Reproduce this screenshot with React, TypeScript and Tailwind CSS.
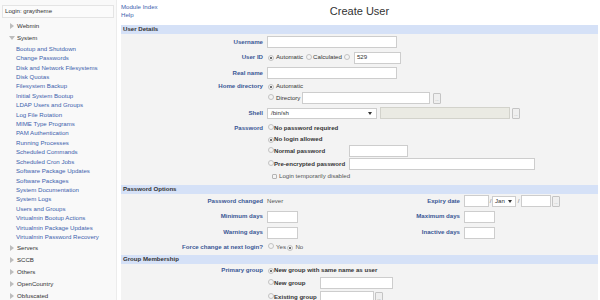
import React from 'react';

const systemItems = [
  'Bootup and Shutdown',
  'Change Passwords',
  'Disk and Network Filesystems',
  'Disk Quotas',
  'Filesystem Backup',
  'Initial System Bootup',
  'LDAP Users and Groups',
  'Log File Rotation',
  'MIME Type Programs',
  'PAM Authentication',
  'Running Processes',
  'Scheduled Commands',
  'Scheduled Cron Jobs',
  'Software Package Updates',
  'Software Packages',
  'System Documentation',
  'System Logs',
  'Users and Groups',
  'Virtualmin Bootup Actions',
  'Virtualmin Package Updates',
  'Virtualmin Password Recovery',
];

const Radio = ({ on }: { on?: boolean }) => (
  <span className="inline-flex w-[6px] h-[6px] shrink-0 items-center justify-center rounded-full border border-[#c2c2c2] bg-[#f4f4f4]">
    {on && <span className="w-[2px] h-[2px] rounded-full bg-[#444]" />}
  </span>
);

const Box = ({ w, className = '' }: { w: string; className?: string }) => (
  <span className={`block h-[12px] shrink-0 border border-[#cdcdcd] bg-white ${w} ${className}`} />
);

const DotsButton = () => (
  <span className="flex w-[8px] h-[11px] shrink-0 items-end justify-center border border-[#c4c4c4] bg-[#efefef] rounded-[1px] text-[4px] leading-[6px] text-[#999]">
    ...
  </span>
);

const Arrow = () => (
  <span className="w-0 h-0 border-x-[2px] border-x-transparent border-t-[3px] border-t-[#333]" />
);

const Category = ({ name, open }: { name: string; open?: boolean }) => (
  <div className="h-[12px] flex items-center pl-[9px]">
    {open ? (
      <span className="w-0 h-0 border-x-[3px] border-x-transparent border-t-[4px] border-t-[#bdbdbd]" />
    ) : (
      <span className="w-0 h-0 border-y-[3px] border-y-transparent border-l-[4px] border-l-[#bdbdbd] ml-[1px] mr-[1px]" />
    )}
    <span className="ml-[2px] text-[#333]">{name}</span>
  </div>
);

const Label = ({ children, h }: { children: React.ReactNode; h: string }) => (
  <div className={`w-[142px] shrink-0 flex items-center justify-end font-bold text-[#3a5795] ${h}`}>
    {children}
  </div>
);

const Label2 = ({ children }: { children: React.ReactNode }) => (
  <div className="w-[64px] shrink-0 flex items-center justify-end font-bold text-[#3a5795]">{children}</div>
);

const SectionHeader = ({ title }: { title: string }) => (
  <div className="h-[9px] bg-[#d5e1f7] pl-[2px] flex items-center font-bold text-[#333]">{title}</div>
);

export default function App() {
  return (
    <div className="w-[600px] h-[300px] overflow-hidden flex bg-white font-['Liberation_Sans',Arial,sans-serif] text-[6.1px] leading-none text-[#333]">
      <aside className="w-[117px] shrink-0 h-full bg-[#f9f9f9] border-r border-[#ececec]">
        <div className="pt-[5px] px-[2px]">
          <div className="h-[13px] border border-[#e4e4e4] bg-[#fbfbfb] flex items-center pl-[2px]">Login: graytheme</div>
        </div>
        <div className="mt-[2px]">
          <Category name="Webmin" />
          <Category name="System" open />
          {systemItems.map((item) => (
            <div key={item} className="h-[9.43px] flex items-center pl-[16px] text-[#3d62ad]">
              {item}
            </div>
          ))}
          <Category name="Servers" />
          <Category name="SCCB" />
          <Category name="Others" />
          <Category name="OpenCountry" />
          <Category name="Obfuscated" />
        </div>
      </aside>

      <main className="flex-1 pl-[4px] pr-[2px]">
        <div className="grid grid-cols-[1fr_auto_1fr] h-[25px]">
          <div className="pt-[3px] text-[#3d62ad]">
            <div className="h-[8px] flex items-center">Module Index</div>
            <div className="h-[8px] flex items-center">Help</div>
          </div>
          <div className="pt-[5px] text-[11px] leading-[12px] text-[#333]">Create User</div>
          <div />
        </div>

        <div className="bg-[#f3f3f3]">
          <SectionHeader title="User Details" />

          <div className="flex h-[16px]">
            <Label h="h-[16px]">Username</Label>
            <div className="ml-[4px] flex items-center">
              <Box w="w-[130px]" />
            </div>
          </div>

          <div className="flex h-[15px]">
            <Label h="h-[15px]">User ID</Label>
            <div className="ml-[4px] flex items-center">
              <span className="ml-[1px]"><Radio on /></span>
              <span className="ml-[2px]">Automatic</span>
              <span className="ml-[3px]"><Radio /></span>
              <span className="ml-[1px]">Calculated</span>
              <span className="ml-[2px]"><Radio /></span>
              <span className="ml-[4px] flex h-[12px] w-[47px] items-center border border-[#cdcdcd] bg-white pl-[2px]">529</span>
            </div>
          </div>

          <div className="flex h-[16px]">
            <Label h="h-[16px]">Real name</Label>
            <div className="ml-[4px] flex items-center">
              <Box w="w-[130px]" />
            </div>
          </div>

          <div className="flex">
            <Label h="h-[11px]">Home directory</Label>
            <div className="ml-[4px]">
              <div className="h-[11px] flex items-center">
                <span className="ml-[1px]"><Radio on /></span>
                <span className="ml-[2px]">Automatic</span>
              </div>
              <div className="h-[12px] flex items-center">
                <span className="ml-[1px]"><Radio /></span>
                <span className="ml-[2px] w-[26px]">Directory</span>
                <Box w="w-[128px]" />
                <span className="ml-[3px]"><DotsButton /></span>
              </div>
            </div>
          </div>

          <div className="flex h-[18px]">
            <Label h="h-[18px]">Shell</Label>
            <div className="ml-[4px] flex items-center">
              <span className="flex h-[11px] w-[110px] items-center justify-between border border-[#cdcdcd] bg-white pl-[3px] pr-[4px]">
                /bin/sh
                <Arrow />
              </span>
              <span className="ml-[3px] block h-[12px] w-[130px] border border-[#d2d2cb] bg-[#eaeae3]" />
              <span className="ml-[2px]"><DotsButton /></span>
            </div>
          </div>

          <div className="flex">
            <Label h="h-[12px]">Password</Label>
            <div className="ml-[4px] font-bold">
              <div className="h-[12px] flex items-center">
                <span className="ml-[1px]"><Radio /></span>
                <span>No password required</span>
              </div>
              <div className="h-[11px] flex items-center">
                <span className="ml-[1px]"><Radio on /></span>
                <span>No login allowed</span>
              </div>
              <div className="h-[12px] flex items-center">
                <span className="ml-[1px]"><Radio /></span>
                <span className="w-[75px]">Normal password</span>
                <Box w="w-[59px]" />
              </div>
              <div className="h-[14px] flex items-center">
                <span className="ml-[1px]"><Radio /></span>
                <span className="w-[75px]">Pre-encrypted password</span>
                <Box w="w-[186px]" />
              </div>
              <div className="h-[10px] flex items-center font-normal text-[#555]">
                <span className="ml-[5px] w-[5px] h-[5px] border border-[#b4b4b4] bg-[#f4f4f4] rounded-[1px]" />
                <span className="ml-[2px]">Login temporarily disabled</span>
              </div>
              <div className="h-[4px]" />
            </div>
          </div>

          <SectionHeader title="Password Options" />

          <div className="flex h-[14px]">
            <Label h="h-[14px]">Password changed</Label>
            <div className="ml-[4px] w-[129px] flex items-center text-[#555]">Never</div>
            <Label2>Expiry date</Label2>
            <div className="ml-[4px] flex items-center">
              <Box w="w-[25px]" />
              <span className="w-[3px] text-center text-[#777]">/</span>
              <span className="flex h-[11px] w-[24px] items-center justify-between border border-[#cdcdcd] bg-white pl-[2px] pr-[3px]">
                Jan
                <Arrow />
              </span>
              <span className="w-[5px] text-center text-[#777]">/</span>
              <Box w="w-[30px]" />
              <span className="ml-[1px]"><DotsButton /></span>
            </div>
          </div>

          <div className="flex h-[17px]">
            <Label h="h-[17px]">Minimum days</Label>
            <div className="ml-[4px] w-[129px] flex items-center">
              <Box w="w-[31px]" />
            </div>
            <Label2>Maximum days</Label2>
            <div className="ml-[4px] flex items-center">
              <Box w="w-[31px]" />
            </div>
          </div>

          <div className="flex h-[15px]">
            <Label h="h-[15px]">Warning days</Label>
            <div className="ml-[4px] w-[129px] flex items-center">
              <Box w="w-[31px]" />
            </div>
            <Label2>Inactive days</Label2>
            <div className="ml-[4px] flex items-center">
              <Box w="w-[31px]" />
            </div>
          </div>

          <div className="flex h-[15px]">
            <Label h="h-[14px]">Force change at next login?</Label>
            <div className="ml-[4px] h-[14px] flex items-center text-[#555]">
              <span className="ml-[1px]"><Radio /></span>
              <span className="ml-[2px]">Yes</span>
              <span className="ml-[1.5px]"><Radio on /></span>
              <span className="ml-[2px]">No</span>
            </div>
          </div>

          <SectionHeader title="Group Membership" />

          <div className="flex">
            <Label h="h-[12px]">Primary group</Label>
            <div className="ml-[4px] font-bold">
              <div className="h-[12px] flex items-center">
                <span className="ml-[1px]"><Radio on /></span>
                <span>New group with same name as user</span>
              </div>
              <div className="h-[14px] flex items-center">
                <span className="ml-[1px]"><Radio /></span>
                <span className="w-[46px]">New group</span>
                <Box w="w-[73px]" />
              </div>
              <div className="h-[14px] flex items-center">
                <span className="ml-[1px]"><Radio /></span>
                <span className="w-[46px]">Existing group</span>
                <Box w="w-[54px]" />
                <span className="ml-[1px]"><DotsButton /></span>
              </div>
            </div>
          </div>
        </div>
      </main>
    </div>
  );
}
